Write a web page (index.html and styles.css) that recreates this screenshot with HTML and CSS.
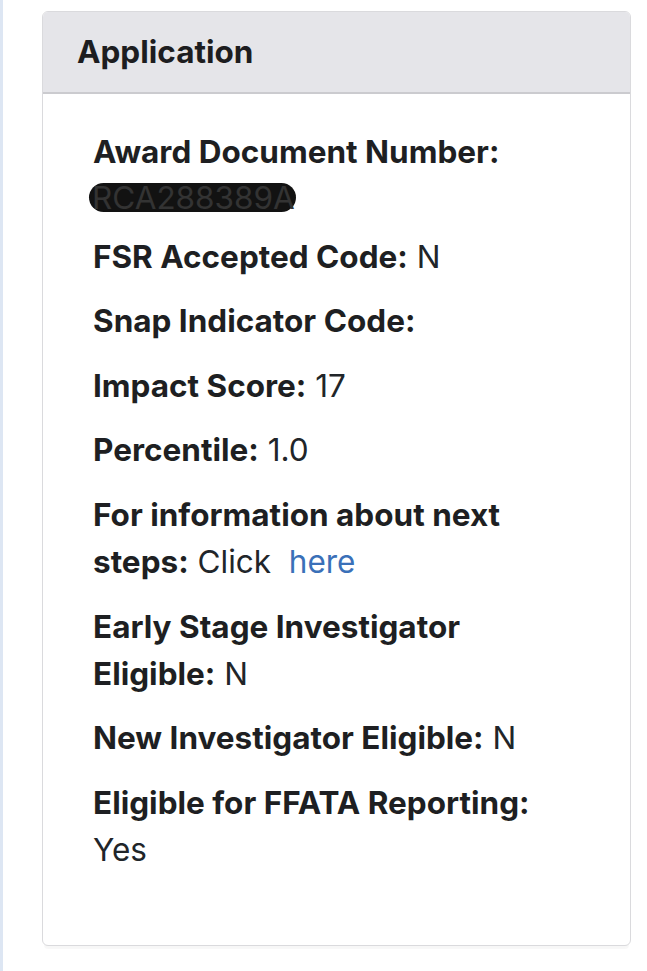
FILE: index.html
```html
<!DOCTYPE html>
<html lang="en">
<head>
<meta charset="utf-8">
<title>Application</title>
<link rel="stylesheet" href="styles.css">
</head>
<body>
<div class="page">
  <section class="card">
    <header class="card-header">Application</header>
    <div class="card-body">
      <p class="field"><b>Award Document Number:</b><span class="value-line"><span class="redacted">RCA288389A</span></span></p>
      <p class="field"><b>FSR Accepted Code:</b> N</p>
      <p class="field"><b>Snap Indicator Code:</b></p>
      <p class="field"><b>Impact Score:</b> 17</p>
      <p class="field"><b>Percentile:</b> 1.0</p>
      <p class="field"><b>For information about next steps:</b> Click&nbsp; <a href="#">here</a></p>
      <p class="field"><b>Early Stage Investigator Eligible:</b> N</p>
      <p class="field"><b>New Investigator Eligible:</b> N</p>
      <p class="field"><b>Eligible for FFATA Reporting:</b> Yes</p>
    </div>
  </section>
</div>
</body>
</html>
```
FILE: styles.css
```css
html, body {
  margin: 0;
  padding: 0;
  background: #ffffff;
}
body {
  font-family: Inter, "Liberation Sans", sans-serif;
  color: #212529;
  border-left: 3px solid #dde6f3;
  min-height: 971px;
  box-sizing: border-box;
}
.page {
  padding: 11px 16px 0 39px;
}
.card {
  width: 589px;
  box-sizing: border-box;
  border: 1px solid #dadadd;
  border-radius: 6px;
  background: #fff;
  box-shadow: 0 5px 1px -2px rgba(0,0,0,0.03);
  overflow: hidden;
}
.card-header {
  background: #e5e5e9;
  border-bottom: 2px solid #cbcbcf;
  height: 82px;
  box-sizing: border-box;
  padding: 0 0 2px 34px;
  display: flex;
  align-items: center;
  font-size: 31.5px;
  font-weight: 700;
  color: #1d1d20;
}
.card-body {
  padding: 34px 70px 72px 50px;
}
.field {
  margin: 0 0 17.6px;
  font-size: 31.5px;
  line-height: 47px;
}
.field:last-child {
  margin-bottom: 0;
}
.field b {
  font-weight: 700;
  color: #1e1f22;
}
.value-line {
  display: block;
  line-height: 40px;
  height: 40px;
}
.redacted {
  display: inline-block;
  background: #121212;
  color: #333333;
  border-radius: 15px;
  line-height: 29px;
  height: 29px;
  padding: 0 1px 0 3px;
  margin-left: -4px;
  vertical-align: middle;
}
a {
  color: #3a70b8;
  text-decoration: none;
}
```
